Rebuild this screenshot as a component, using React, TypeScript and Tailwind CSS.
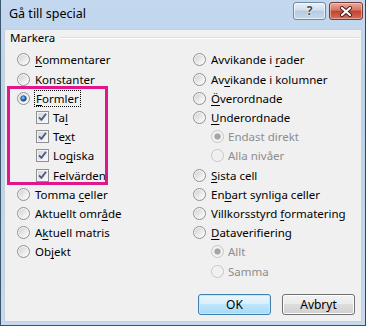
import React from "react";

type Item = {
  label: string;
  u?: number; // index of access key letter
  kind?: "radio" | "check";
  checked?: boolean;
  disabled?: boolean;
  indent?: boolean;
  focus?: boolean;
};

const left: Item[] = [
  { label: "Kommentarer", u: 0 },
  { label: "Konstanter" },
  { label: "Formler", u: 0, checked: true, focus: true },
  { label: "Tal", u: 2, kind: "check", checked: true, indent: true },
  { label: "Text", u: 2, kind: "check", checked: true, indent: true },
  { label: "Logiska", u: 2, kind: "check", checked: true, indent: true },
  { label: "Felvärden", u: 4, kind: "check", checked: true, indent: true },
  { label: "Tomma celler", u: 6 },
  { label: "Aktuellt område", u: 12 },
  { label: "Aktuell matris", u: 1 },
  { label: "Objekt", u: 2 },
];

const right: Item[] = [
  { label: "Avvikande i rader", u: 12 },
  { label: "Avvikande i kolumner", u: 2 },
  { label: "Överordnade", u: 0 },
  { label: "Underordnade", u: 0 },
  { label: "Endast direkt", checked: true, disabled: true, indent: true },
  { label: "Alla nivåer", disabled: true, indent: true },
  { label: "Sista cell", u: 0 },
  { label: "Enbart synliga celler", u: 2 },
  { label: "Villkorsstyrd formatering", u: 14 },
  { label: "Dataverifiering", u: 0 },
  { label: "Allt", checked: true, disabled: true, indent: true },
  { label: "Samma", disabled: true, indent: true },
];

function Radio({ checked, disabled }: { checked?: boolean; disabled?: boolean }) {
  return (
    <svg width="13" height="13" viewBox="0 0 13 13" className="shrink-0">
      <defs>
        <linearGradient id="rf" x1="0" y1="0" x2="1" y2="1">
          <stop offset="0" stopColor="#d2d2d2" />
          <stop offset="1" stopColor="#fdfdfd" />
        </linearGradient>
        <radialGradient id="rd" cx="0.4" cy="0.35" r="0.7">
          <stop offset="0" stopColor="#8fd2ff" />
          <stop offset="0.5" stopColor="#2a7fc8" />
          <stop offset="1" stopColor="#0d3468" />
        </radialGradient>
      </defs>
      <circle cx="6.5" cy="6.5" r="6" fill={disabled ? "#f4f4f4" : "#f6f6f6"} stroke={disabled ? "#c4c4c4" : "#8e8f8f"} />
      <circle cx="6.5" cy="6.5" r="4.6" fill={disabled ? "#f0f0f0" : "url(#rf)"} />
      {checked && (
        <circle cx="6.5" cy="6.5" r="2.8" fill={disabled ? "#a6a6a6" : "url(#rd)"} stroke={disabled ? "#9a9a9a" : "#1c3d6a"} strokeWidth="0.6" />
      )}
    </svg>
  );
}

function Check({ checked }: { checked?: boolean }) {
  return (
    <svg width="13" height="13" viewBox="0 0 13 13" className="shrink-0">
      <defs>
        <linearGradient id="cf" x1="0" y1="0" x2="1" y2="1">
          <stop offset="0" stopColor="#d6d6d6" />
          <stop offset="1" stopColor="#fafafa" />
        </linearGradient>
      </defs>
      <rect x="0.5" y="0.5" width="12" height="12" fill="#f4f4f4" stroke="#8e8f8f" />
      <rect x="2" y="2" width="9" height="9" fill="url(#cf)" />
      {checked && (
        <path d="M3 6.3 L5.4 8.9 L10 2.8" fill="none" stroke="#4c5d8f" strokeWidth="1.9" strokeLinejoin="round" />
      )}
    </svg>
  );
}

function Label({ item }: { item: Item }) {
  const { label, u } = item;
  const text =
    u === undefined ? (
      label
    ) : (
      <>
        {label.slice(0, u)}
        <span className="underline underline-offset-2">{label[u]}</span>
        {label.slice(u + 1)}
      </>
    );
  return (
    <span
      className={`whitespace-nowrap leading-[15px] ${item.disabled ? "text-[#8d8d8d]" : "text-black"} ${
        item.focus ? "outline outline-1 outline-dotted outline-black outline-offset-0 px-px" : ""
      }`}
    >
      {text}
    </span>
  );
}

function Row({ item }: { item: Item }) {
  const isCheck = item.kind === "check";
  return (
    <div className={`flex items-center h-[19.2px] ${item.indent ? (isCheck ? "pl-[19px] gap-[4px]" : "pl-[18px] gap-[4px]") : "gap-[5px]"}`}>
      {isCheck ? <Check checked={item.checked} /> : <Radio checked={item.checked} disabled={item.disabled} />}
      <Label item={item} />
    </div>
  );
}

function Button({ children, primary }: { children: React.ReactNode; primary?: boolean }) {
  return (
    <div
      className={`w-[73px] h-[21px] rounded-[3px] border flex items-center justify-center text-[12px] text-black ${
        primary
          ? "border-[#3c7fb1] bg-[linear-gradient(#eaf6fd,#d9f0fc_45%,#bee6fd_50%,#a7d9f5)] shadow-[inset_0_0_0_1px_#cbe8f9]"
          : "border-[#707070] bg-[linear-gradient(#f2f2f2,#ebebeb_45%,#dddddd_50%,#cfcfcf)] shadow-[inset_0_0_0_1px_#fcfcfc]"
      }`}
    >
      {children}
    </div>
  );
}

export default function App() {
  return (
    <div
      className="w-[366px] h-[326px] flex flex-col bg-[linear-gradient(#c3d8ee,#bcd2ea_40%,#c6d9ed)] border-l border-[#3c566e] border-r border-r-[#2f4a60] border-b border-b-[#2b5c6a] text-[11.5px]"
      style={{ fontFamily: '"Noto Sans", "Segoe UI", sans-serif' }}
    >
      {/* title bar */}
      <div className="h-[29px] flex items-start shrink-0">
        <div className="pl-[8px] pt-[6px] text-[12.5px] leading-[16px] text-black">Gå till special</div>
        <div className="ml-auto mr-[2px] mt-[2px] flex gap-[3px]">
          <div className="w-[33px] h-[18px] rounded-[3px] border border-[#6f8aa6] bg-[linear-gradient(#e8f0f8,#cfdeee_45%,#b5cbe2_50%,#c6d9ec)] shadow-[inset_0_0_0_1px_rgba(255,255,255,0.6)] flex items-center justify-center">
            <span className="text-[12px] font-bold leading-none text-[#4a4a4a] [text-shadow:0_0_2px_#fff,0_0_1px_#fff]">?</span>
          </div>
          <div className="w-[34px] h-[18px] rounded-[3px] border border-[#7a3a32] bg-[linear-gradient(#e9a99b,#d47565_45%,#c4402c_50%,#d0705c)] shadow-[inset_0_0_0_1px_rgba(255,220,210,0.5)] flex items-center justify-center">
            <svg width="14" height="11" viewBox="0 0 14 11">
              <path d="M3 2 L11 9 M11 2 L3 9" stroke="#4a1a14" strokeWidth="4" strokeLinecap="round" />
              <path d="M3 2 L11 9 M11 2 L3 9" stroke="#ffffff" strokeWidth="2.2" strokeLinecap="round" />
            </svg>
          </div>
        </div>
      </div>

      {/* client area */}
      <div className="flex-1 mx-[3px] mb-[3px] bg-[#f0f0f0] border border-[#c5d2de] flex flex-col">
        <div className="flex items-center pl-[5px] pr-[2px] h-[15px]">
          <span className="leading-[15px] text-black">Markera</span>
          <div className="flex-1 ml-[5px] flex flex-col">
            <div className="h-px bg-[#d5dfe5]" />
            <div className="h-px bg-white" />
          </div>
        </div>

        <div className="grid grid-cols-[176px_1fr] pl-[12px] mt-[5.4px]">
          <div className="relative flex flex-col">
            {left.map((it) => (
              <Row key={it.label} item={it} />
            ))}
            <div className="absolute left-[-10px] top-[35.6px] w-[101px] h-[99px] border-[3px] border-[#e0168c] pointer-events-none" />
          </div>
          <div className="flex flex-col">
            {right.map((it) => (
              <Row key={it.label} item={it} />
            ))}
          </div>
        </div>

        <div className="mt-auto flex justify-end gap-[11px] pr-[6px] pb-[6px]">
          <Button primary>OK</Button>
          <Button>Avbryt</Button>
        </div>
      </div>
    </div>
  );
}
